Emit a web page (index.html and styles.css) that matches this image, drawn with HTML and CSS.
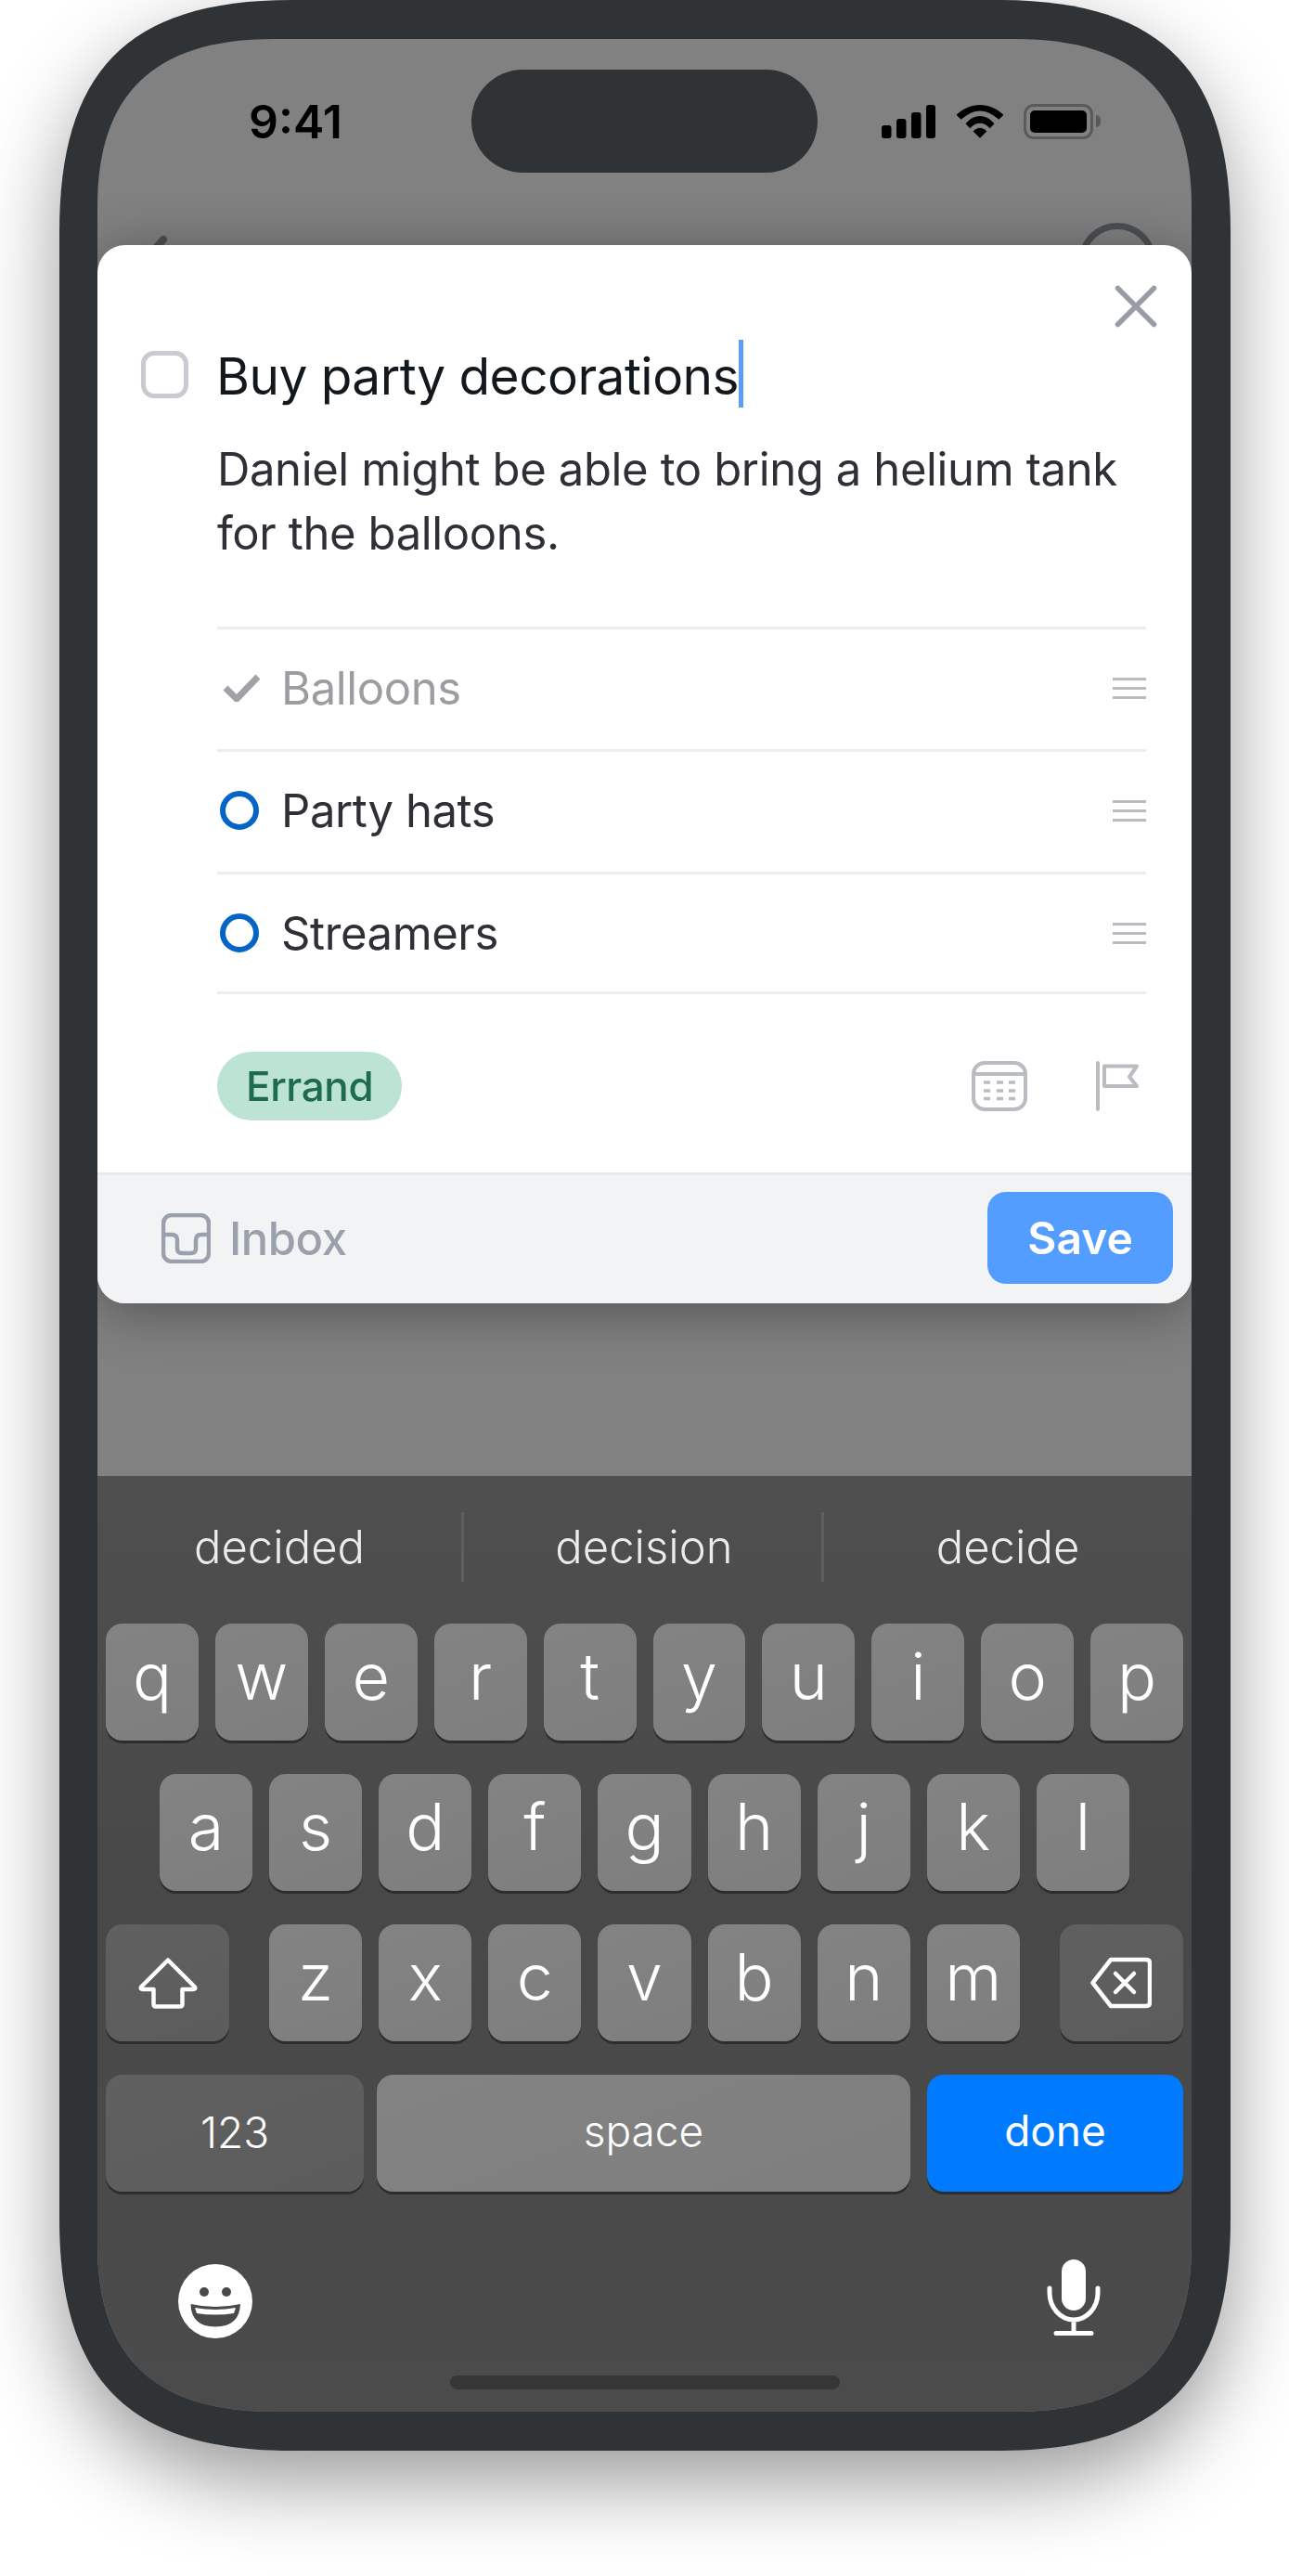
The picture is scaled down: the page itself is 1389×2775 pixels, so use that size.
FILE: index.html
```html
<!DOCTYPE html>
<html lang="en">
<head>
<meta charset="utf-8">
<title>Quick add task</title>
<link rel="stylesheet" href="styles.css">
</head>
<body>
<div class="phone-shadow">
  <div class="phone">
    <div class="screen">
      <svg class="ghost-back" viewBox="0 0 30 40"><path d="M22 5 L5 24"/></svg>
      <div class="ghost-avatar"></div>

      <header class="status">
        <div class="time">9:41</div>
        <div class="island"></div>
        <div class="status-icons">
          <svg class="signal" viewBox="0 0 58 36"><rect x="0" y="22" width="10.5" height="14" rx="3"/><rect x="16" y="15" width="10.5" height="21" rx="3"/><rect x="32" y="8" width="10.5" height="28" rx="3"/><rect x="48" y="0" width="10" height="36" rx="3"/></svg>
          <svg class="wifi" viewBox="0 0 155 110"><path d="M0 33C45 -11 110 -11 155 33L140 48C95 10 60 10 15 48Z"/><path d="M30 62C58 28 97 28 125 62L110 77C90 55 65 55 45 77Z"/><path d="M55 87C70 72 85 72 100 87L77.5 109Z"/></svg>
          <div class="battery"><div class="battery-fill"></div></div>
          <div class="battery-nub"></div>
        </div>
      </header>

      <section class="card">
        <svg class="close" viewBox="0 0 46 46"><path d="M3.500 3.500L42.500 42.500M42.500 3.500L3.500 42.500"/></svg>
        <div class="title-row">
          <div class="checkbox"></div>
          <h1 class="title">Buy party decorations</h1>
          <span class="caret"></span>
        </div>
        <p class="notes">Daniel might be able to bring a helium tank for the balloons.</p>
        <ul class="checklist">
          <li class="item item-done">
            <span class="item-mark"><svg class="tick" viewBox="0 0 40 30"><path d="M3 15L15 27L38 3"/></svg></span>
            <span class="item-text">Balloons</span>
            <span class="handle"></span>
          </li>
          <li class="item">
            <span class="item-mark"><span class="ring"></span></span>
            <span class="item-text">Party hats</span>
            <span class="handle"></span>
          </li>
          <li class="item">
            <span class="item-mark"><span class="ring"></span></span>
            <span class="item-text">Streamers</span>
            <span class="handle"></span>
          </li>
        </ul>
        <div class="meta">
          <span class="tag">Errand</span>
          <div class="meta-icons">
            <svg class="calendar" viewBox="0 0 60 54"><rect x="2" y="2" width="56" height="50" rx="12"/><path d="M4 14H56"/><path class="cal-dots" d="M13 23H20M27 23H34M40 23H47M13 32H20M27 32H34M40 32H47M13 40.500H20M27 40.500H34M40 40.500H47"/></svg>
            <svg class="flag" viewBox="0 0 46 54"><path d="M2 2V52"/><path d="M9 5.500H44L36 17L44 27H9Z"/></svg>
          </div>
        </div>
        <footer class="card-footer">
          <div class="project">
            <svg class="inbox" viewBox="0 0 53 54"><rect x="2" y="2" width="49" height="50" rx="9"/><path d="M2 23H11Q17 23 17 29V38Q17 43 22 43H32Q37 43 37 38V29Q37 23 43 23H51"/></svg>
            <span>Inbox</span>
          </div>
          <button class="save">Save</button>
        </footer>
      </section>

      <div class="backdrop-gap"></div>

      <section class="keyboard">
        <div class="suggestions">
          <span class="suggestion">decided</span>
          <span class="suggestion">decision</span>
          <span class="suggestion">decide</span>
        </div>
        <div class="key-row">
          <span class="key">q</span><span class="key">w</span><span class="key">e</span><span class="key">r</span><span class="key">t</span><span class="key">y</span><span class="key">u</span><span class="key">i</span><span class="key">o</span><span class="key">p</span>
        </div>
        <div class="key-row key-row-inset">
          <span class="key">a</span><span class="key">s</span><span class="key">d</span><span class="key">f</span><span class="key">g</span><span class="key">h</span><span class="key">j</span><span class="key">k</span><span class="key">l</span>
        </div>
        <div class="key-row">
          <span class="key key-fn key-wide">
            <svg class="shift" viewBox="0 0 64 55"><path d="M32 2.500L61 31.500Q62 34 59 34H47.500V50Q47.500 52.500 45 52.500H19Q16.500 52.500 16.500 50V34H5Q2 34 3 31.500Z"/></svg>
          </span>
          <span class="key">z</span><span class="key">x</span><span class="key">c</span><span class="key">v</span><span class="key">b</span><span class="key">n</span><span class="key">m</span>
          <span class="key key-fn key-wide">
            <svg class="backspace" viewBox="0 0 66 56"><path d="M2.500 28L22 3H60Q64 3 64 7V49Q64 53 60 53H22Z"/><path d="M27 18L47 38M47 18L27 38"/></svg>
          </span>
        </div>
        <div class="key-row key-row-last">
          <span class="key key-fn key-text key-num">123</span>
          <span class="key key-text key-space">space</span>
          <span class="key key-text key-done">done</span>
        </div>
        <div class="kb-tools">
          <svg class="emoji" viewBox="0 0 80 80"><circle class="emoji-face" cx="40" cy="40" r="40"/><circle class="emoji-cut" cx="28" cy="30" r="5"/><circle class="emoji-cut" cx="52" cy="30" r="5"/><path class="emoji-cut" d="M13.500 43Q40 49 67 43Q66 67.500 40 67.500Q14 67.500 13.500 43Z"/><path class="emoji-face" d="M18 47Q40 51 62 47L60 53Q40 56 20 53Z"/></svg>
          <svg class="mic" viewBox="0 0 60 84"><rect class="mic-fill" x="17" y="2" width="26" height="55" rx="13"/><path d="M4 33V38C4 54 16 67 30 67C44 67 56 54 56 38V33M30 67V81M11 81.500H49"/></svg>
        </div>
        <div class="home-indicator"></div>
      </section>
    </div>
  </div>
</div>
</body>
</html>
```

FILE: styles.css
```css
* { box-sizing: border-box; }

html, body { margin: 0; background: #fff; }

body {
  width: 1389px;
  height: 2775px;
  padding-left: 64px;
  overflow: hidden;
  font-family: Inter, "Liberation Sans", sans-serif;
}

.phone-shadow {
  width: 1262px;
  height: 2640px;
  filter: drop-shadow(0 34px 44px rgba(0, 0, 0, .4));
}

.phone {
  width: 1262px;
  height: 2640px;
  padding: 42px 42px 42px 41px;
  background: #303336;
  clip-path: path("M0 250C0 80 70 0 250 0H1012C1192 0 1262 80 1262 250V2390C1262 2560 1192 2640 1012 2640H250C70 2640 0 2560 0 2390Z");
}

.screen {
  position: relative;
  display: flex;
  flex-direction: column;
  width: 1179px;
  height: 2556px;
  background: #818181;
  clip-path: path("M0 180C0 60 60 0 190 0H989C1119 0 1179 60 1179 180V2376C1179 2496 1119 2556 989 2556H190C60 2556 0 2496 0 2376Z");
}

/* Page behind the sheet */
.ghost-back {
  position: absolute;
  left: 49px;
  top: 211px;
  width: 30px;
  height: 40px;
  fill: none;
  stroke: #4c4f54;
  stroke-width: 8;
  stroke-linecap: round;
}

.ghost-avatar {
  position: absolute;
  left: 1057px;
  top: 198px;
  width: 84px;
  height: 84px;
  border: 7px solid #4c4f54;
  border-radius: 50%;
}

/* Status bar */
.status {
  position: relative;
  display: grid;
  grid-template-columns: 403px 373px 1fr;
  align-items: center;
  padding-top: 33px;
}

.time {
  padding-left: 163px;
  font-size: 50px;
  font-weight: 600;
  line-height: 60px;
  color: #000;
}

.island {
  height: 111px;
  border-radius: 56px;
  background: #303336;
}

.status-icons {
  display: flex;
  align-items: center;
  padding-left: 69px;
}

.signal { width: 58px; height: 36px; fill: #000; }

.wifi {
  width: 52px;
  height: 36px;
  margin-left: 22px;
  fill: #000;
}

.battery {
  width: 75px;
  height: 38px;
  margin-left: 21px;
  padding: 4px;
  border: 3px solid #5a5a5a;
  border-radius: 11px;
}

.battery-fill {
  width: 100%;
  height: 100%;
  border-radius: 5px;
  background: #000;
}

.battery-nub {
  width: 5px;
  height: 13px;
  margin-left: 3px;
  border-radius: 0 6px 6px 0;
  background: #5a5a5a;
}

/* Sheet */
.card {
  position: relative;
  display: flex;
  flex-direction: column;
  height: 1140px;
  margin-top: 78px;
  padding-top: 104px;
  border-radius: 30px;
  background: #fff;
  box-shadow: 0 8px 60px rgba(0, 0, 0, .36);
}

.close {
  position: absolute;
  right: 37px;
  top: 43px;
  width: 46px;
  height: 46px;
  fill: none;
  stroke: #979ca6;
  stroke-width: 5.5;
  stroke-linecap: round;
}

.title-row {
  display: flex;
  align-items: flex-start;
  padding-left: 47px;
}

.checkbox {
  flex: none;
  width: 51px;
  height: 51px;
  margin: 10px 30px 0 0;
  border: 5px solid #c8ccd0;
  border-radius: 14px;
}

.title {
  margin: 0;
  font-size: 55px;
  font-weight: 400;
  letter-spacing: -.55px;
  line-height: 74px;
  color: #13181c;
}

.caret {
  flex: none;
  width: 5px;
  height: 73px;
  margin-top: -2px;
  background: #5b9df9;
}

.notes {
  margin: 29px 60px 0 129px;
  font-size: 49px;
  letter-spacing: -.38px;
  line-height: 69px;
  color: #2e3036;
}

.checklist {
  margin: 66px 49px 0 129px;
  padding: 0;
  border-bottom: 3px solid #ededef;
  list-style: none;
}

.item {
  display: flex;
  align-items: center;
  height: 132px;
  padding-bottom: 3px;
  border-top: 3px solid #ededef;
  font-size: 49px;
  letter-spacing: -.4px;
  color: #2e3036;
}

.item:last-child { height: 129px; padding-bottom: 0; }

.item-done { color: #9c9da1; }

.item-mark {
  display: flex;
  flex: none;
  width: 69px;
  padding-left: 3px;
}

.tick {
  width: 40px;
  height: 30px;
  margin-left: 3px;
  fill: none;
  stroke: #a0a2a6;
  stroke-width: 7;
}

.ring {
  width: 42px;
  height: 42px;
  border: 6px solid #0565c7;
  border-radius: 50%;
}

.handle {
  width: 36px;
  height: 23px;
  margin-left: auto;
  border-top: 3px solid #b9bbbe;
  border-bottom: 3px solid #b9bbbe;
  background: linear-gradient(#b9bbbe, #b9bbbe) center / 100% 3px no-repeat;
}

.meta {
  display: flex;
  align-items: center;
  justify-content: space-between;
  margin: 62px 57px 0 129px;
}

.tag {
  display: flex;
  align-items: center;
  height: 74px;
  padding: 0 31px;
  border-radius: 37px;
  background: #bde3d4;
  font-size: 44px;
  font-weight: 500;
  letter-spacing: -.4px;
  color: #1f6b4e;
}

.meta-icons {
  display: flex;
  align-items: center;
  gap: 74px;
}

.calendar {
  width: 60px;
  height: 54px;
  fill: none;
  stroke: #b9bcc1;
  stroke-width: 4;
}

.cal-dots { stroke-width: 3.500; }

.flag {
  width: 46px;
  height: 54px;
  fill: none;
  stroke: #b9bcc1;
  stroke-width: 4;
  stroke-linecap: round;
  stroke-linejoin: round;
}

.card-footer {
  display: flex;
  align-items: center;
  justify-content: space-between;
  height: 141px;
  margin-top: auto;
  padding: 0 20px 3px 69px;
  border-top: 3px solid #e8e9ec;
  border-radius: 0 0 30px 30px;
  background: #f2f3f5;
}

.project {
  display: flex;
  align-items: center;
  gap: 20px;
  padding-top: 1px;
  font-size: 49px;
  font-weight: 500;
  letter-spacing: -.5px;
  color: #9ba1ac;
}

.inbox {
  width: 53px;
  height: 54px;
  fill: none;
  stroke: #9ba1ac;
  stroke-width: 4.500;
}

.save {
  width: 200px;
  height: 99px;
  padding: 0;
  border: 0;
  border-radius: 20px;
  background: #529dff;
  font-family: inherit;
  font-size: 48px;
  font-weight: 600;
  color: #fff;
}

.backdrop-gap { height: 186px; }

/* Keyboard */
.keyboard {
  position: relative;
  flex: 1;
  padding: 39px 9px 0;
  background: linear-gradient(#4f4f4f, #484848 45%, #4b4b4b);
}

.suggestions {
  display: grid;
  grid-template-columns: 392px 391px 396px;
  height: 75px;
  margin: 0 -9px 45px;
}

.suggestion {
  display: flex;
  align-items: center;
  justify-content: center;
  font-size: 49px;
  font-weight: 300;
  color: #ececec;
}

.suggestion + .suggestion { border-left: 3px solid #5f5f5f; }

.suggestion:last-child { border-left: 0; box-shadow: -3px 0 0 -0px #5f5f5f; }

.key-row {
  display: flex;
  gap: 18px;
  height: 126px;
  margin-bottom: 36px;
}

.key-row-inset { padding: 0 58px; }

.key {
  display: flex;
  flex: 1;
  align-items: center;
  justify-content: center;
  padding-bottom: 13px;
  border-radius: 18px;
  background: linear-gradient(160deg, #838383, #7e7e7e);
  box-shadow: 0 3px 0 #2d2d2d;
  font-size: 70px;
  font-weight: 300;
  color: #fff;
}

.key-fn { background: linear-gradient(160deg, #606060, #5c5c5c); }

.key-wide {
  flex: none;
  width: 133px;
  padding-bottom: 0;
}

.key-wide:first-child { margin-right: 25px; }
.key-wide:last-child { margin-left: 25px; }

.key-text { flex: none; font-size: 46px; padding-bottom: 6px; }

.key-num { width: 278px; margin-right: -4px; padding-bottom: 3px; }
.key-space { width: 575px; }
.key-done { width: 276px; background: #007aff; font-weight: 400; }

.shift {
  width: 64px;
  height: 55px;
  fill: none;
  stroke: #fff;
  stroke-width: 4.500;
  stroke-linejoin: round;
}

.backspace {
  width: 66px;
  height: 56px;
  fill: none;
  stroke: #fff;
  stroke-width: 4.500;
  stroke-linecap: round;
  stroke-linejoin: round;
}

.kb-tools {
  display: flex;
  align-items: flex-start;
  justify-content: space-between;
  padding: 41px 88px 0 78px;
}

.emoji { width: 80px; height: 80px; margin-top: 1px; }
.emoji-face { fill: #fff; }
.emoji-cut { fill: #4a4a4a; }

.mic {
  width: 60px;
  height: 84px;
  margin-top: -6px;
  fill: none;
  stroke: #fff;
  stroke-width: 5;
  stroke-linecap: round;
}

.mic-fill { fill: #fff; stroke: none; }

.home-indicator {
  position: absolute;
  left: 380px;
  bottom: 24px;
  width: 420px;
  height: 15px;
  border-radius: 8px;
  background: #363636;
}
```
